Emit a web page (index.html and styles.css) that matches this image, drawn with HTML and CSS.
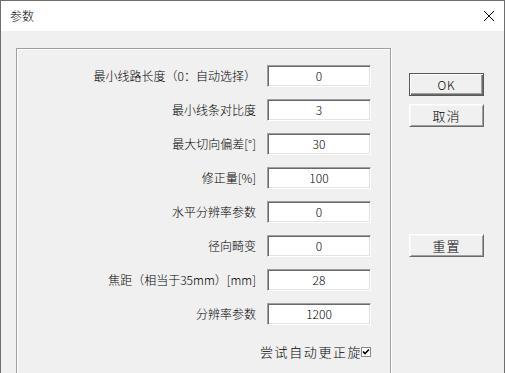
FILE: index.html
```html
<!DOCTYPE html>
<html lang="zh-CN">
<head>
    <meta charset="UTF-8">
    <title>参数</title>
    <link rel="stylesheet" href="styles.css">
</head>
<body>
    <div class="window">
        <div class="titlebar">
            <span class="title">参数</span>
            <svg class="close" width="12" height="12" viewBox="0 0 12 12">
                <path d="M1 1 L11 11 M11 1 L1 11" stroke="#111" stroke-width="1" fill="none"/>
            </svg>
        </div>

        <div class="content">
            <div class="group">
                <div class="form">
                    <label class="lbl">最小线路长度（0：自动选择）</label>
                    <div class="field">0</div>

                    <label class="lbl">最小线条对比度</label>
                    <div class="field">3</div>

                    <label class="lbl">最大切向偏差[°]</label>
                    <div class="field">30</div>

                    <label class="lbl">修正量[%]</label>
                    <div class="field">100</div>

                    <label class="lbl">水平分辨率参数</label>
                    <div class="field">0</div>

                    <label class="lbl">径向畸变</label>
                    <div class="field">0</div>

                    <label class="lbl">焦距（相当于35mm）[mm]</label>
                    <div class="field">28</div>

                    <label class="lbl">分辨率参数</label>
                    <div class="field">1200</div>

                    <div class="check-row">
                        <span class="check-text">尝试自动更正旋转</span>
                        <span class="checkbox">
                            <svg width="8" height="8" viewBox="0 0 8 8">
                                <path d="M1 3.5 L3 5.5 L7 1.5" stroke="#000" stroke-width="1.6" fill="none"/>
                            </svg>
                        </span>
                    </div>
                </div>
            </div>

            <div class="side">
                <button class="btn default">OK</button>
                <button class="btn">取消</button>
                <button class="btn reset">重置</button>
            </div>
        </div>
    </div>
</body>
</html>
```

FILE: styles.css
```css
body {
    margin: 0;
    overflow: hidden;
    font-family: "Noto Sans CJK SC", "Liberation Sans", sans-serif;
    font-size: 12px;
    font-weight: 300;
    color: #000;
    background: #f0f0f0;
}

.window {
    width: 505px;
    height: 390px;
    box-sizing: border-box;
    border: 1px solid #6e6e6e;
    background: #f0f0f0;
    overflow: hidden;
}

.titlebar {
    height: 30px;
    background: #fff;
    display: flex;
    align-items: center;
    justify-content: space-between;
    padding: 0 9px 0 9px;
}

.title {
    font-size: 12px;
    line-height: 14px;
}

.content {
    display: flex;
    align-items: flex-start;
    padding: 17px 0 0 15px;
}

.group {
    width: 375px;
    height: 360px;
    box-sizing: border-box;
    border: 1px solid #a0a0a0;
    box-shadow: inset 1px 1px 0 #fff, 1px 1px 0 #fff;
    padding: 16px 19px 0 10px;
}

.form {
    display: grid;
    grid-template-columns: 1fr 104px;
    grid-auto-rows: 22px;
    column-gap: 11px;
    row-gap: 12px;
}

.lbl {
    align-self: center;
    text-align: right;
    white-space: nowrap;
    line-height: 16px;
}

.field {
    box-sizing: border-box;
    height: 22px;
    background: #fff;
    border: 1px solid;
    border-color: #a0a0a0 #fff #fff #a0a0a0;
    box-shadow: inset 1px 1px 0 #696969, inset -1px -1px 0 #e3e3e3;
    text-align: center;
    line-height: 19px;
}

/* text is clipped by the box, as in the original dialog */
.check-row {
    grid-column: 1 / -1;
    justify-self: end;
    margin-top: 7px;
    display: flex;
    align-items: center;
}

.check-text {
    width: 101px;
    overflow: hidden;
    white-space: nowrap;
    font-size: 13px;
    letter-spacing: 1.6px;
    line-height: 18px;
}

.checkbox {
    width: 10px;
    height: 10px;
    box-sizing: border-box;
    border: 1px solid #8a8a8a;
    background: #fff;
    display: flex;
    align-items: center;
    justify-content: center;
}

.side {
    display: flex;
    flex-direction: column;
    margin: 25px 0 0 18px;
    width: 75px;
}

.btn {
    width: 75px;
    height: 23px;
    box-sizing: border-box;
    padding: 0;
    margin: 0 0 8px 0;
    background: #f0f0f0;
    border: 1px solid;
    border-color: #fff #696969 #696969 #fff;
    box-shadow: inset 1px 1px 0 #f8f8f8, inset -1px -1px 0 #a0a0a0;
    font-family: "Noto Sans CJK SC", "Liberation Sans", sans-serif;
    font-size: 13px;
    font-weight: 300;
    letter-spacing: 1px;
    color: #000;
}

.btn.default {
    border-color: #5a5a5a;
    box-shadow: inset 1px 1px 0 #fff, inset -1px -1px 0 #696969, inset -2px -2px 0 #a0a0a0;
    font-size: 12px;
}

.btn.reset {
    margin-top: 99px;
}
```
